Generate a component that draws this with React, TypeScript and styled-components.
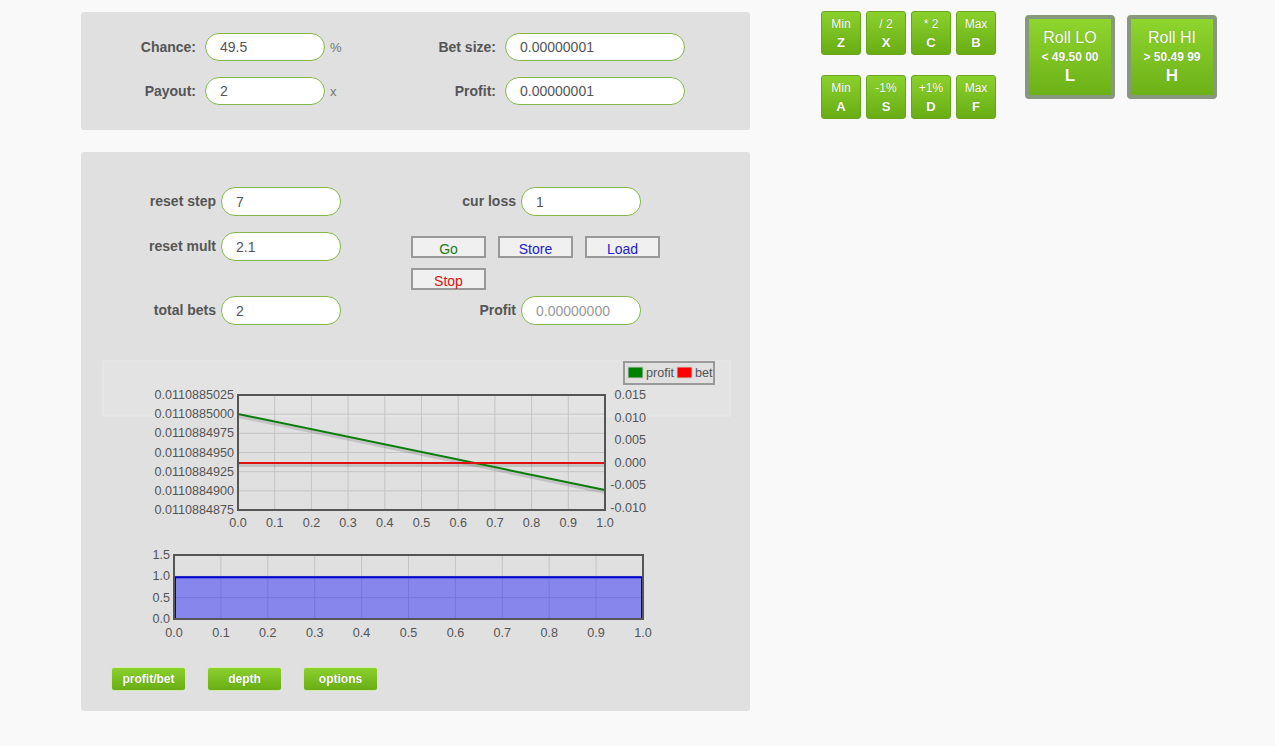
import styled, { createGlobalStyle } from 'styled-components'

const panelColor = '#e0e0e0'
const labelColor = '#555'
const axisColor = '#545454'
const greenTop = '#8bd12c'
const greenBottom = '#68ad14'

const GlobalStyle = createGlobalStyle`
  body {
    margin: 0;
    background: #f9f9f9;
    font-family: 'Liberation Sans', Arial, sans-serif;
  }
`

const Page = styled.div`
  display: flex;
  align-items: flex-start;
  padding: 12px 0 0 81px;
`

const LeftColumn = styled.div`
  width: 669px;
  display: flex;
  flex-direction: column;
  gap: 22px;
`

const Panel = styled.div`
  background: ${panelColor};
  border-radius: 3px;
`

const BetPanel = styled(Panel)`
  display: grid;
  grid-template-columns: 124px 120px 51px 129px 180px;
  grid-auto-rows: 28px;
  row-gap: 16px;
  align-items: center;
  padding: 21px 0 25px;
`

const Label = styled.label`
  text-align: right;
  padding-right: ${({ $pad = 9 }) => $pad}px;
  font-size: 14px;
  font-weight: bold;
  color: ${labelColor};
  white-space: nowrap;
`

const Input = styled.div`
  box-sizing: border-box;
  height: ${({ $h = 28 }) => $h}px;
  border: 1px solid #84b94a;
  border-radius: 14px;
  background: #fff;
  padding-left: 14px;
  display: flex;
  align-items: center;
  font-size: 14px;
  color: ${({ $muted }) => ($muted ? '#999' : labelColor)};
`

const Unit = styled.span`
  padding-left: 5px;
  font-size: 13px;
  color: #777;
`

const StrategyPanel = styled(Panel)`
  display: flex;
  flex-direction: column;
  padding: 35px 0 20px;
`

const FormGrid = styled.div`
  display: grid;
  grid-template-columns: 140px 120px 180px 120px;
  grid-template-rows: 29px 80px 29px;
  align-items: start;
`

const FormLabel = styled(Label)`
  line-height: 29px;
  margin-top: ${({ $offset = 0 }) => $offset}px;
`

const FormInput = styled(Input)`
  height: 29px;
  margin-top: ${({ $offset = 0 }) => $offset}px;
`

const ActionGrid = styled.div`
  grid-column: 3 / 5;
  display: grid;
  grid-template-columns: repeat(3, 75px);
  grid-auto-rows: 22px;
  column-gap: 12px;
  row-gap: 10px;
  padding: 20px 0 0 70px;
`

const ActionButton = styled.button`
  box-sizing: border-box;
  height: 22px;
  padding: 3px 0 0;
  border: 2px solid #999;
  background: #f0f0f0;
  font-family: inherit;
  font-size: 14px;
  color: ${({ $color }) => $color};
`

const ChartBox = styled.svg`
  display: block;
  margin-top: ${({ $top }) => $top}px;
  font-family: 'Liberation Sans', Arial, sans-serif;
  font-size: 12.6px;
`

const TabRow = styled.div`
  display: flex;
  gap: 21px;
  padding-left: 30px;
  margin-top: 22px;
`

const GreenButton = styled.button`
  box-sizing: border-box;
  background: linear-gradient(${greenTop}, ${greenBottom});
  color: #fff;
  font-family: inherit;
  text-shadow: 0 0 1px rgba(0, 0, 0, 0.25);
  cursor: pointer;
`

const TabButton = styled(GreenButton)`
  width: 75px;
  height: 24px;
  border: 1px solid #d2ebb0;
  border-radius: 3px;
  font-size: 12px;
  font-weight: bold;
  padding: 0;
`

const KeyGrid = styled.div`
  display: grid;
  grid-template-columns: repeat(4, 40px);
  grid-auto-rows: 44px;
  column-gap: 5px;
  row-gap: 20px;
  margin: -1px 0 0 71px;
`

const KeyButton = styled(GreenButton)`
  border: 1px solid #6aa41e;
  border-radius: 3px;
  padding: 5px 0 0;
  display: flex;
  flex-direction: column;
  align-items: center;
  gap: 5px;
  font-size: 12px;
  line-height: 14px;
`

const KeyLetter = styled.span`
  font-weight: bold;
  font-size: 13px;
`

const RollGroup = styled.div`
  display: flex;
  gap: 12px;
  margin: 3px 0 0 29px;
`

const RollButton = styled(GreenButton)`
  width: 90px;
  height: 84px;
  border: 4px solid #86987e;
  border-radius: 4px;
  background: linear-gradient(#8fd52e, #6cb117);
  padding: 8px 0 0;
  display: flex;
  flex-direction: column;
  align-items: center;
`

const RollTitle = styled.span`
  font-size: 16px;
  line-height: 22px;
`

const RollRange = styled.span`
  font-size: 12px;
  font-weight: bold;
  line-height: 17px;
`

const RollKey = styled.span`
  font-size: 17px;
  font-weight: bold;
  line-height: 19px;
`

const keys = [
  ['Min', 'Z'],
  ['/ 2', 'X'],
  ['* 2', 'C'],
  ['Max', 'B'],
  ['Min', 'A'],
  ['-1%', 'S'],
  ['+1%', 'D'],
  ['Max', 'F'],
]

const range = (n) => Array.from({ length: n }, (_, i) => i)

// profit / bet chart, coords relative to the panel
const ProfitChart = () => {
  const x0 = 157
  const y0 = 40
  const w = 367
  const h = 115
  const leftTicks = [
    '0.0110885025',
    '0.0110885000',
    '0.0110884975',
    '0.0110884950',
    '0.0110884925',
    '0.0110884900',
    '0.0110884875',
  ]
  const rightTicks = ['0.015', '0.010', '0.005', '0.000', '-0.005', '-0.010']
  return (
    <ChartBox $top={30} width={669} height={180}>
      <rect x={22} y={6} width={627} height={55} fill="#e3e3e3" stroke="#e9e9e9" />
      {range(11).map((i) => (
        <line key={'v' + i} x1={x0 + (w * i) / 10} x2={x0 + (w * i) / 10} y1={y0} y2={y0 + h} stroke="#c4c4c4" />
      ))}
      {leftTicks.map((t, i) => {
        const y = y0 + (h * i) / 6
        return (
          <g key={t}>
            <line x1={x0} x2={x0 + w} y1={y} y2={y} stroke="#c4c4c4" />
            <text x={x0 - 4} y={y + 4} textAnchor="end" fill={axisColor}>
              {t}
            </text>
          </g>
        )
      })}
      {rightTicks.map((t, i) => (
        <text key={t} x={565} y={y0 + 4 + (113 * i) / 5} textAnchor="end" fill={axisColor}>
          {t}
        </text>
      ))}
      {range(11).map((i) => (
        <text key={'x' + i} x={x0 + (w * i) / 10} y={y0 + h + 17} textAnchor="middle" fill={axisColor}>
          {(i / 10).toFixed(1)}
        </text>
      ))}
      <line x1={x0} y1={y0 + 21} x2={x0 + w} y2={y0 + 97} stroke="rgba(0,0,0,0.12)" strokeWidth={4} />
      <line x1={x0} y1={y0 + 70} x2={x0 + w} y2={y0 + 70} stroke="rgba(0,0,0,0.12)" strokeWidth={4} />
      <line x1={x0} y1={y0 + 19} x2={x0 + w} y2={y0 + 95} stroke="#0a7d0a" strokeWidth={2} />
      <line x1={x0} y1={y0 + 68} x2={x0 + w} y2={y0 + 68} stroke="#e01010" strokeWidth={2} />
      <rect x={x0} y={y0} width={w} height={h} fill="none" stroke="#555" strokeWidth={2} />
      <rect x={543} y={7} width={90} height={22} fill={panelColor} stroke="#9a9a9a" strokeWidth={2} />
      <rect x={547} y={12} width={15} height={11} fill="#008000" stroke="#ccc" />
      <text x={565} y={22} fill={axisColor}>
        profit
      </text>
      <rect x={596} y={12} width={15} height={11} fill="#ff0000" stroke="#ccc" />
      <text x={614} y={22} fill={axisColor}>
        bet
      </text>
    </ChartBox>
  )
}

const DepthChart = () => {
  const x0 = 93
  const y0 = 15
  const w = 469
  const h = 64
  return (
    <ChartBox $top={5} width={669} height={105}>
      {range(11).map((i) => (
        <line key={'v' + i} x1={x0 + (w * i) / 10} x2={x0 + (w * i) / 10} y1={y0} y2={y0 + h} stroke="#c4c4c4" />
      ))}
      {['1.5', '1.0', '0.5', '0.0'].map((t, i) => {
        const y = y0 + (h * i) / 3
        return (
          <g key={t}>
            <line x1={x0} x2={x0 + w} y1={y} y2={y} stroke="#c4c4c4" />
            <text x={x0 - 4} y={y + 4} textAnchor="end" fill={axisColor}>
              {t}
            </text>
          </g>
        )
      })}
      {range(11).map((i) => (
        <text key={'x' + i} x={x0 + (w * i) / 10} y={y0 + h + 18} textAnchor="middle" fill={axisColor}>
          {(i / 10).toFixed(1)}
        </text>
      ))}
      <rect x={x0} y={y0 + h / 3} width={w} height={(h * 2) / 3} fill="rgba(0,0,255,0.4)" />
      <polyline
        points={`${x0 + 1},${y0 + h} ${x0 + 1},${y0 + h / 3 + 1} ${x0 + w - 1},${y0 + h / 3 + 1} ${x0 + w - 1},${y0 + h}`}
        fill="none"
        stroke="#0000cc"
        strokeWidth={2}
      />
      <rect x={x0} y={y0} width={w} height={h} fill="none" stroke="#555" strokeWidth={2} />
    </ChartBox>
  )
}

export default function App() {
  return (
    <Page>
      <GlobalStyle />
      <LeftColumn>
        <BetPanel>
          <Label>Chance:</Label>
          <Input>49.5</Input>
          <Unit>%</Unit>
          <Label>Bet size:</Label>
          <Input>0.00000001</Input>
          <Label>Payout:</Label>
          <Input>2</Input>
          <Unit>x</Unit>
          <Label>Profit:</Label>
          <Input>0.00000001</Input>
        </BetPanel>

        <StrategyPanel>
          <FormGrid>
            <FormLabel $pad={5}>reset step</FormLabel>
            <FormInput>7</FormInput>
            <FormLabel $pad={5}>cur loss</FormLabel>
            <FormInput>1</FormInput>

            <FormLabel $pad={5} $offset={16}>
              reset mult
            </FormLabel>
            <FormInput $offset={16}>2.1</FormInput>
            <ActionGrid>
              <ActionButton $color="#1a7a1a">Go</ActionButton>
              <ActionButton $color="#2222cc">Store</ActionButton>
              <ActionButton $color="#2222cc">Load</ActionButton>
              <ActionButton $color="#e01010">Stop</ActionButton>
            </ActionGrid>

            <FormLabel $pad={5}>total bets</FormLabel>
            <FormInput>2</FormInput>
            <FormLabel $pad={5}>Profit</FormLabel>
            <FormInput $muted>0.00000000</FormInput>
          </FormGrid>

          <ProfitChart />
          <DepthChart />

          <TabRow>
            <TabButton>profit/bet</TabButton>
            <TabButton>depth</TabButton>
            <TabButton>options</TabButton>
          </TabRow>
        </StrategyPanel>
      </LeftColumn>

      <KeyGrid>
        {keys.map(([top, key], i) => (
          <KeyButton key={i}>
            <span>{top}</span>
            <KeyLetter>{key}</KeyLetter>
          </KeyButton>
        ))}
      </KeyGrid>

      <RollGroup>
        <RollButton>
          <RollTitle>Roll LO</RollTitle>
          <RollRange>&lt; 49.50 00</RollRange>
          <RollKey>L</RollKey>
        </RollButton>
        <RollButton>
          <RollTitle>Roll HI</RollTitle>
          <RollRange>&gt; 50.49 99</RollRange>
          <RollKey>H</RollKey>
        </RollButton>
      </RollGroup>
    </Page>
  )
}
